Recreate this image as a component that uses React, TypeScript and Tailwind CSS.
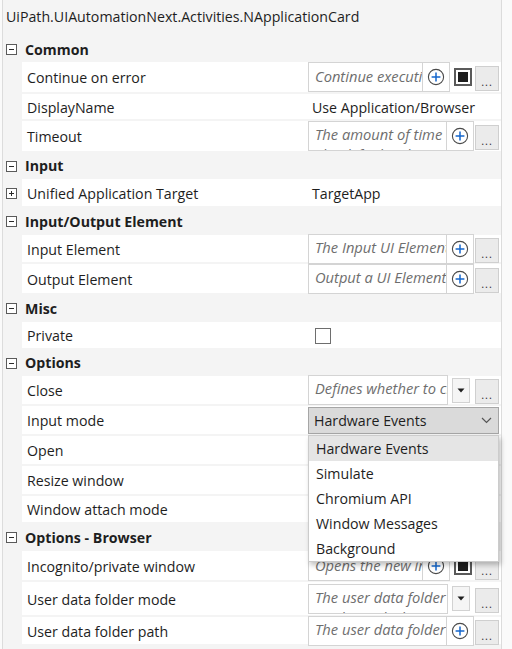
import React from 'react';

const font = "font-['Segoe_UI','Open_Sans',sans-serif]";

function ExpandBox({ plus }: { plus?: boolean }) {
  return (
    <div className="w-[11px] h-[11px] border border-[#5a5a5a] bg-white relative">
      <div className="absolute left-[2px] right-[2px] top-[4px] h-px bg-[#2a2a2a]" />
      {plus && <div className="absolute top-[2px] bottom-[2px] left-[4px] w-px bg-[#2a2a2a]" />}
    </div>
  );
}

function PlusIcon() {
  return (
    <svg width="18" height="18" viewBox="0 0 18 18">
      <circle cx="9" cy="9" r="7.6" fill="white" stroke="#4a4a4a" strokeWidth="1.1" />
      <path d="M9 4.6v8.8M4.6 9h8.8" stroke="#1466cc" strokeWidth="1.5" />
    </svg>
  );
}

function Dots() {
  return (
    <div className="ml-auto mr-[2px] mt-[3px] w-[24px] h-[25px] bg-[#ebebeb] border border-[#cfcfcf] flex items-end justify-center pb-[3px] text-[11px] leading-none text-[#333] tracking-[1px]">
      ...
    </div>
  );
}

function BlackCheck() {
  return (
    <div className="ml-[4px] w-[18px] h-[18px] border-2 border-[#5a5a5a] bg-white flex items-center justify-center">
      <div className="w-[10px] h-[10px] bg-[#1e1e1e]" />
    </div>
  );
}

function DropBtn() {
  return (
    <div className="ml-[4px] w-[18px] h-[25px] bg-[#f5f5f5] border border-[#d2d2d2] flex items-center justify-center">
      <svg width="8" height="5" viewBox="0 0 8 5">
        <path d="M0.5 0.5h7L4 4.5z" fill="#1e1e1e" />
      </svg>
    </div>
  );
}

const hint = 'italic text-[14.7px] text-[#6e6e6e] leading-[20px]';

function TextBox({ text, w, second, plus }: { text: string; w: string; second?: string; plus?: boolean }) {
  return (
    <div className={`${w} h-[30px] border border-[#d4d4d4] bg-white flex overflow-hidden`}>
      <div className={`flex-1 min-w-0 flex flex-col overflow-hidden pl-[6px] pt-[2px] ${hint}`}>
        <span className="whitespace-nowrap">{text}</span>
        {second && <span className="whitespace-nowrap">{second}</span>}
      </div>
      {plus && (
        <div className="w-[27px] shrink-0 border-l border-[#d4d4d4] flex items-center justify-center">
          <PlusIcon />
        </div>
      )}
    </div>
  );
}

function CheckEditor({ text }: { text: string }) {
  return (
    <>
      <div className={`w-[115px] h-[30px] border border-[#d4d4d4] bg-white overflow-hidden pl-[6px] pt-[3px] whitespace-nowrap ${hint}`}>
        {text}
      </div>
      <div className="w-[27px] h-[30px] border border-l-0 border-[#d4d4d4] bg-white flex items-center justify-center">
        <PlusIcon />
      </div>
      <BlackCheck />
      <Dots />
    </>
  );
}

function Category({ label, h }: { label: string; h: string }) {
  return (
    <div className={`flex items-center ${h}`}>
      <div className="w-[19px] shrink-0 pl-[3px] flex items-center">
        <ExpandBox />
      </div>
      <div className="font-bold text-[#1e1e1e] pl-[3px]">{label}</div>
    </div>
  );
}

function Row({ label, h, expand, children }: { label: string; h: string; expand?: boolean; children?: React.ReactNode }) {
  return (
    <div className={`flex ${h}`}>
      <div className="w-[19px] shrink-0 pl-[3px] flex items-center">{expand && <ExpandBox plus />}</div>
      <div className="flex-1 flex bg-white border-b-2 border-[#f4f4f4]">
        <div className="w-[286px] shrink-0 flex items-center pl-[5px] pt-[2px] text-[#1e1e1e] whitespace-nowrap overflow-hidden">
          {label}
        </div>
        <div className="flex-1 relative flex items-center">{children}</div>
      </div>
    </div>
  );
}

const options = ['Hardware Events', 'Simulate', 'Chromium API', 'Window Messages', 'Background'];

export default function App() {
  return (
    <div className={`w-[512px] h-[649px] bg-[#fafafa] flex overflow-hidden text-[14.2px] ${font}`}>
      <div className="ml-[2px] w-[500px] h-full border-l border-r border-[#dcdcdc] bg-[#f4f4f4]">
        <div className="h-[37px] pl-[3px] pt-[6px] text-[#1e1e1e] whitespace-nowrap">
          UiPath.UIAutomationNext.Activities.NApplicationCard
        </div>

        <Category label="Common" h="h-[25px]" />
        <Row label="Continue on error" h="h-[32px]">
          <CheckEditor text="Continue executing" />
        </Row>
        <Row label="DisplayName" h="h-[27px]">
          <span className="pl-[4px] pt-[2px] text-[#1e1e1e] whitespace-nowrap">Use Application/Browser</span>
        </Row>
        <Row label="Timeout" h="h-[32px]">
          <TextBox text="The amount of time" second="The default value is" w="w-[166px]" plus />
          <Dots />
        </Row>

        <Category label="Input" h="h-[26px]" />
        <Row label="Unified Application Target" h="h-[29px]" expand>
          <span className="pl-[4px] pt-[2px] text-[#1e1e1e]">TargetApp</span>
        </Row>

        <Category label="Input/Output Element" h="h-[27px]" />
        <Row label="Input Element" h="h-[29px]">
          <TextBox text="The Input UI Element" w="w-[166px]" plus />
          <Dots />
        </Row>
        <Row label="Output Element" h="h-[31px]">
          <TextBox text="Output a UI Element" w="w-[166px]" plus />
          <Dots />
        </Row>

        <Category label="Misc" h="h-[27px]" />
        <Row label="Private" h="h-[28px]">
          <div className="ml-[7px] mt-[2px] w-[16px] h-[16px] border border-[#6e6e6e] bg-white" />
        </Row>

        <Category label="Options" h="h-[26px]" />
        <Row label="Close" h="h-[30px]">
          <TextBox text="Defines whether to close" w="w-[140px]" />
          <DropBtn />
          <Dots />
        </Row>
        <Row label="Input mode" h="h-[30px]">
          <div className="w-[191px] h-[27px] mt-[1px] bg-[#dadada] border border-[#a6a6a6] flex items-center pl-[5px] pr-[6px] text-[#1e1e1e]">
            <span>Hardware Events</span>
            <svg className="ml-auto" width="11" height="7" viewBox="0 0 11 7">
              <path d="M1 1l4.5 4.5L10 1" fill="none" stroke="#555" strokeWidth="1.2" />
            </svg>
          </div>
          <div className="absolute left-0 top-[29px] z-10 w-[191px] bg-white border border-[#cccccc] shadow-[2px_3px_5px_rgba(0,0,0,0.25)]">
            {options.map((o, i) => (
              <div
                key={o}
                className={`h-[25px] flex items-center pl-[7px] text-[#1e1e1e] ${i === 0 ? 'bg-[#e5e5e5]' : ''}`}
              >
                {o}
              </div>
            ))}
          </div>
        </Row>
        <Row label="Open" h="h-[30px]" />
        <Row label="Resize window" h="h-[30px]" />
        <Row label="Window attach mode" h="h-[28px]" />

        <Category label="Options - Browser" h="h-[27px]" />
        <Row label="Incognito/private window" h="h-[31px]">
          <CheckEditor text="Opens the new incognito" />
        </Row>
        <Row label="User data folder mode" h="h-[35px]">
          <TextBox text="The user data folder" second="mode used. The" w="w-[140px]" />
          <DropBtn />
          <Dots />
        </Row>
        <Row label="User data folder path" h="h-[29px]">
          <TextBox text="The user data folder" w="w-[166px]" plus />
          <Dots />
        </Row>
      </div>
    </div>
  );
}
